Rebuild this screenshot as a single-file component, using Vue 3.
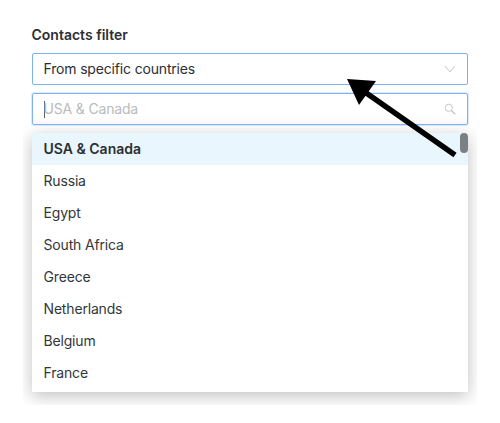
<script setup>
const countries = ['USA & Canada', 'Russia', 'Egypt', 'South Africa', 'Greece', 'Netherlands', 'Belgium', 'France']
</script>

<template>
  <div class="page">
    <div class="form">
      <div class="label">Contacts filter</div>
      <div class="field select">
        <span class="value">From specific countries</span>
        <svg class="chev" width="12" height="8" viewBox="0 0 12 8"><path d="M1 1l5 6 5-6" fill="none" stroke="#c4c6c9" stroke-width="1" /></svg>
      </div>
      <div class="field search">
        <i class="caret"></i>
        <span class="ph">USA &amp; Canada</span>
        <svg class="mag" width="12" height="12" viewBox="0 0 12 12"><circle cx="4.8" cy="4.8" r="3.6" fill="none" stroke="#c4c6c9" stroke-width="1" /><path d="M7.4 7.4l3.8 3.8" stroke="#c4c6c9" stroke-width="1.4" /></svg>
      </div>
      <div class="clip">
        <div class="menu">
          <div class="list">
            <div v-for="(c, i) in countries" :key="c" class="row" :class="{ active: i === 0 }">{{ c }}</div>
          </div>
          <div class="thumb"></div>
        </div>
      </div>
    </div>
    <svg class="arrow" width="500" height="423" viewBox="0 0 500 423">
      <path d="M455 155L362 90" stroke="#000" stroke-width="5.5" fill="none" />
      <path d="M347 79L376 81L359 105Z" fill="#000" />
    </svg>
  </div>
</template>

<style scoped>
.page {
  position: relative;
  width: 500px;
  height: 423px;
  background: #fff;
  overflow: hidden;
  font-family: Inter, "Liberation Sans", sans-serif;
  color: #2b2f33;
  font-size: 14px;
  box-sizing: border-box;
  padding: 26px 32.5px 0 31.5px;
}
.label {
  font-weight: 600;
  font-size: 14px;
  line-height: 17px;
  margin-bottom: 10px;
}
.field {
  box-sizing: border-box;
  height: 32px;
  border: 1px solid #7db3f5;
  border-radius: 2px;
  display: flex;
  align-items: center;
  justify-content: space-between;
  padding: 0 11px;
  background: #fff;
  margin-bottom: 8px;
}
.value {
  letter-spacing: -0.17px;
  position: relative;
  top: -1px;
}
.search {
  position: relative;
  box-shadow: 0 0 0 1px #dbe9fb;
  background: linear-gradient(#fff 70%, #f8f8f8);
}
.caret {
  position: absolute;
  left: 11px;
  top: 7px;
  width: 1px;
  height: 17px;
  background: #5c6066;
}
.ph {
  color: #b9bbbe;
  letter-spacing: -0.17px;
  position: relative;
  top: -1px;
}
.clip {
  margin: -8px -9px 0 -8.5px;
  padding: 8px 9px 13px 8.5px;
  overflow: hidden;
}
.menu {
  position: relative;
  height: 259px;
  background: #fff;
  box-shadow: 0 4px 16px rgba(0, 0, 0, 0.25);
}
.row {
  height: 32px;
  line-height: 32px;
  padding-left: 12px;
  color: #33373b;
  letter-spacing: -0.17px;
}
.row.active {
  background: #eaf6fe;
  font-weight: 600;
  color: #2b2f33;
  letter-spacing: 0;
}
.thumb {
  position: absolute;
  right: 0;
  top: 0;
  width: 8px;
  height: 20px;
  border-radius: 4px;
  background: #7b8085;
}
.arrow {
  position: absolute;
  left: 0;
  top: 0;
  pointer-events: none;
}
</style>
